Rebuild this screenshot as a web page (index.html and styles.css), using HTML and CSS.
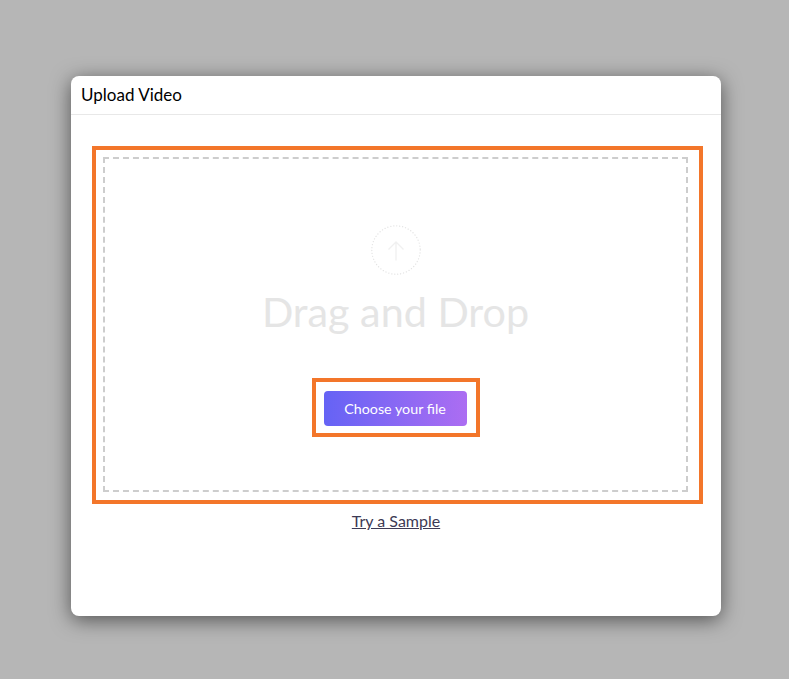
FILE: index.html
```html
<!DOCTYPE html>
<html lang="en">
<head>
<meta charset="utf-8">
<title>Upload Video</title>
<link rel="stylesheet" href="styles.css">
</head>
<body>
<main class="modal">
  <header class="modal-header">Upload Video</header>
  <section class="modal-body">
    <div class="highlight-outer">
      <div class="dropzone">
        <svg class="upload-icon" width="50" height="50" viewBox="0 0 50 50" fill="none" aria-hidden="true">
          <circle cx="25" cy="25" r="24.2" stroke="#e4e4e4" stroke-width="1.3" stroke-linecap="round" stroke-dasharray="0.1 2.9"/>
          <path d="M25 35.5V17M17.5 24.5L25 17l7.500 7.500" stroke="#f0f0f0" stroke-width="1.3"/>
        </svg>
        <h1 class="drop-title">Drag and Drop</h1>
        <div class="highlight-button">
          <button class="choose-button" type="button">Choose your file</button>
        </div>
      </div>
    </div>
    <a class="sample-link" href="#">Try a Sample</a>
  </section>
</main>
</body>
</html>
```
FILE: styles.css
```css
* { box-sizing: border-box; }
html, body { margin: 0; height: 100%; }
body {
  background: #b6b6b6;
  font-family: Lato, "Noto Sans", sans-serif;
  padding: 76px 68px 63px 71px;
}
.modal {
  width: 650px;
  height: 540px;
  background: #fff;
  border-radius: 8px;
  box-shadow: 0 4px 20px rgba(0, 0, 0, 0.55);
  display: flex;
  flex-direction: column;
}
.modal-header {
  height: 39px;
  padding: 0 10px 2px;
  border-bottom: 1px solid #e8e8e8;
  display: flex;
  align-items: center;
  font-size: 17px;
  color: #000;
}
.modal-body {
  padding-top: 31px;
  display: flex;
  flex-direction: column;
  align-items: center;
}
.highlight-outer {
  width: 611px;
  height: 358px;
  margin-left: 3px;
  border: 4px solid #f3762a;
  padding: 7px 11px 8px 7px;
}
.dropzone {
  height: 100%;
  border: 2px dashed #cdcdcd;
  display: flex;
  flex-direction: column;
  align-items: center;
  padding-top: 66px;
}
.upload-icon { display: block; }
.drop-title {
  margin: 10px 0 0;
  font-size: 41.3px;
  line-height: 52px;
  font-weight: 400;
  color: #e5e5e5;
}
.highlight-button {
  margin-top: 41px;
  width: 168px;
  height: 59px;
  border: 4px solid #f3762a;
  padding: 9px 8px;
}
.choose-button {
  display: block;
  width: 143px;
  height: 35px;
  border: 0;
  padding: 0 0 1px;
  border-radius: 4px;
  background: linear-gradient(90deg, #6563f5, #ac6df2);
  color: #fff;
  font: 14.3px Lato, "Noto Sans", sans-serif;
}
.sample-link {
  margin-top: 7px;
  font-size: 16px;
  line-height: 20px;
  color: #3d3a55;
  text-decoration: underline;
}
```
